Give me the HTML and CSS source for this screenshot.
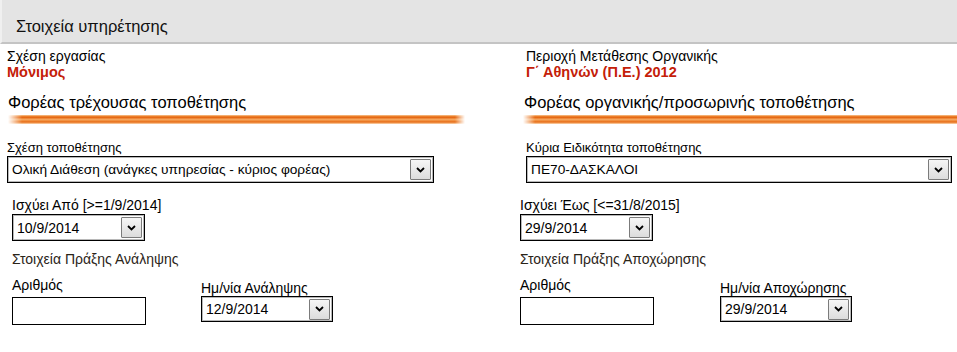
FILE: index.html
```html
<!DOCTYPE html>
<html lang="el">
<head>
<meta charset="utf-8">
<title>Στοιχεία υπηρέτησης</title>
<link rel="stylesheet" href="styles.css">
</head>
<body>
<div class="header"><span class="header-title">Στοιχεία υπηρέτησης</span></div>
<div class="grid">
  <div class="info info-left">
    <div class="lbl">Σχέση εργασίας</div>
    <div class="val">Μόνιμος</div>
  </div>
  <div class="info info-right">
    <div class="lbl">Περιοχή Μετάθεσης Οργανικής</div>
    <div class="val">Γ΄ Αθηνών (Π.Ε.) 2012</div>
  </div>

  <div class="sect sect-left">
    <div class="sect-title">Φορέας τρέχουσας τοποθέτησης</div>
    <div class="bar bar-left"></div>
  </div>
  <div class="sect sect-right">
    <div class="sect-title">Φορέας οργανικής/προσωρινής τοποθέτησης</div>
    <div class="bar bar-right"></div>
  </div>

  <div class="field field-main-left">
    <div class="flbl">Σχέση τοποθέτησης</div>
    <div class="sel sel-wide-left">
      <span class="sel-text">Ολική Διάθεση (ανάγκες υπηρεσίας - κύριος φορέας)</span>
      <span class="sel-btn"><svg width="9" height="6" viewBox="0 0 9 6"><path d="M1 1 L4.5 4.5 L8 1" fill="none" stroke="#000" stroke-width="1.8"/></svg></span>
    </div>
  </div>
  <div class="field field-main-right">
    <div class="flbl">Κύρια Ειδικότητα τοποθέτησης</div>
    <div class="sel sel-wide-right">
      <span class="sel-text">ΠΕ70-ΔΑΣΚΑΛΟΙ</span>
      <span class="sel-btn"><svg width="9" height="6" viewBox="0 0 9 6"><path d="M1 1 L4.5 4.5 L8 1" fill="none" stroke="#000" stroke-width="1.8"/></svg></span>
    </div>
  </div>

  <div class="field field-date-left">
    <div class="dlbl">Ισχύει Από [&gt;=1/9/2014]</div>
    <div class="sel sel-date">
      <span class="sel-text">10/9/2014</span>
      <span class="sel-btn"><svg width="9" height="6" viewBox="0 0 9 6"><path d="M1 1 L4.5 4.5 L8 1" fill="none" stroke="#000" stroke-width="1.8"/></svg></span>
    </div>
  </div>
  <div class="field field-date-right">
    <div class="dlbl">Ισχύει Έως [&lt;=31/8/2015]</div>
    <div class="sel sel-date">
      <span class="sel-text">29/9/2014</span>
      <span class="sel-btn"><svg width="9" height="6" viewBox="0 0 9 6"><path d="M1 1 L4.5 4.5 L8 1" fill="none" stroke="#000" stroke-width="1.8"/></svg></span>
    </div>
  </div>

  <div class="act act-left">
    <div class="act-title">Στοιχεία Πράξης Ανάληψης</div>
    <div class="act-row">
      <div class="act-num act-num-left">
        <div class="num-lbl">Αριθμός</div>
        <div class="txt-input"></div>
      </div>
      <div class="act-date">
        <div class="date-lbl">Ημ/νία Ανάληψης</div>
        <div class="sel sel-small">
          <span class="sel-text">12/9/2014</span>
          <span class="sel-btn"><svg width="9" height="6" viewBox="0 0 9 6"><path d="M1 1 L4.5 4.5 L8 1" fill="none" stroke="#000" stroke-width="1.8"/></svg></span>
        </div>
      </div>
    </div>
  </div>
  <div class="act act-right">
    <div class="act-title">Στοιχεία Πράξης Αποχώρησης</div>
    <div class="act-row">
      <div class="act-num act-num-right">
        <div class="num-lbl">Αριθμός</div>
        <div class="txt-input"></div>
      </div>
      <div class="act-date">
        <div class="date-lbl">Ημ/νία Αποχώρησης</div>
        <div class="sel sel-small">
          <span class="sel-text">29/9/2014</span>
          <span class="sel-btn"><svg width="9" height="6" viewBox="0 0 9 6"><path d="M1 1 L4.5 4.5 L8 1" fill="none" stroke="#000" stroke-width="1.8"/></svg></span>
        </div>
      </div>
    </div>
  </div>
</div>
</body>
</html>
```

FILE: styles.css
```css
html, body {
  margin: 0;
  padding: 0;
  background: #fff;
}
body {
  font-family: "Liberation Sans", Arial, sans-serif;
  color: #000;
  width: 957px;
  height: 352px;
  overflow: hidden;
}
.header {
  height: 42px;
  background: #e4e4e4;
  border-bottom: 2px solid #c4c4c4;
  border-left: 2px solid #f0f0f0;
  display: flex;
  align-items: center;
  padding-left: 14px;
}
.header-title {
  font-size: 16.5px;
  color: #111;
  padding-top: 11px;
}
.grid {
  display: grid;
  grid-template-columns: 520px 437px;
}
.lbl {
  font-size: 14px;
  line-height: 15px;
}
.val {
  font-size: 14.5px;
  line-height: 16px;
  font-weight: bold;
  color: #c42008;
}
.info {
  padding-top: 5px;
}
.info-left { padding-left: 7px; }
.info-right { padding-left: 6px; }

.sect {
  padding-top: 13px;
}
.sect-title {
  font-size: 16.5px;
  line-height: 19px;
}
.sect-left { padding-left: 8px; }
.sect-right { padding-left: 3px; }
.sect-right .sect-title { padding-left: 1px; }
.bar {
  height: 9px;
  margin-top: 3px;
  background: linear-gradient(to bottom,
    #f9cfa5 0%, #ee8a36 12%, #e46410 26%, #ef8d3e 40%,
    #f6a862 52%, #ef8a38 64%, #e66c18 78%, #f3a868 90%, #fcdcbc 100%);
}
.bar-left {
  width: 457px;
  -webkit-mask-image: linear-gradient(to right, transparent 0, #000 14px, #000 calc(100% - 10px), transparent 100%);
  mask-image: linear-gradient(to right, transparent 0, #000 14px, #000 calc(100% - 10px), transparent 100%);
}
.bar-right {
  -webkit-mask-image: linear-gradient(to right, transparent 0, #000 12px);
  mask-image: linear-gradient(to right, transparent 0, #000 12px);
}

.flbl {
  font-size: 13px;
  line-height: 15px;
}
.dlbl {
  font-size: 14px;
  line-height: 15px;
}
.field-main-left, .field-main-right {
  padding-top: 16px;
}
.field-main-left { padding-left: 7px; }
.field-main-right { padding-left: 6px; }
.field-main-left .sel, .field-main-right .sel { margin-top: 1px; }
.field-date-left, .field-date-right {
  padding-top: 15px;
}
.field-date-left .sel, .field-date-right .sel { margin-top: 1px; }
.field-date-left { padding-left: 12px; }
.field-date-right { padding-left: 0; }

.sel {
  display: flex;
  align-items: center;
  box-sizing: border-box;
  height: 27px;
  border: 1px solid #000;
  box-shadow: inset 0 0 0 1px #b8b8b8;
  background: #fff;
  padding: 0 2px 0 4px;
}
.sel-wide-left { width: 427px; }
.sel-wide-right { width: 426px; }
.sel-wide-left .sel-text, .sel-wide-right .sel-text { font-size: 13.7px; }
.sel-date { width: 133px; height: 27px; }
.sel-small { height: 26px; width: 132px; }
.sel-text {
  flex: 1;
  font-size: 14px;
  white-space: nowrap;
  overflow: hidden;
}
.sel-btn {
  width: 19px;
  height: 19px;
  border: 1px solid #7b7b7b;
  border-radius: 1px;
  background: linear-gradient(to bottom, #f6f6f6, #dcdcdc);
  display: flex;
  align-items: center;
  justify-content: center;
}

.act {
  padding-top: 10px;
}
.act-left { padding-left: 12px; }
.act-right { padding-left: 0; }
.act-title {
  font-size: 14px;
  line-height: 16px;
  color: #2a2418;
}
.act-row {
  display: flex;
  margin-top: 10px;
}
.act-num-left { width: 189px; }
.act-num-right { width: 200px; }
.num-lbl {
  font-size: 14px;
  line-height: 17px;
}
.txt-input {
  width: 134px;
  height: 28px;
  box-sizing: border-box;
  border: 1px solid #000;
  margin-top: 3px;
}
.act-date {
  padding-top: 4px;
}
.date-lbl {
  font-size: 14px;
  line-height: 15px;
}
```
